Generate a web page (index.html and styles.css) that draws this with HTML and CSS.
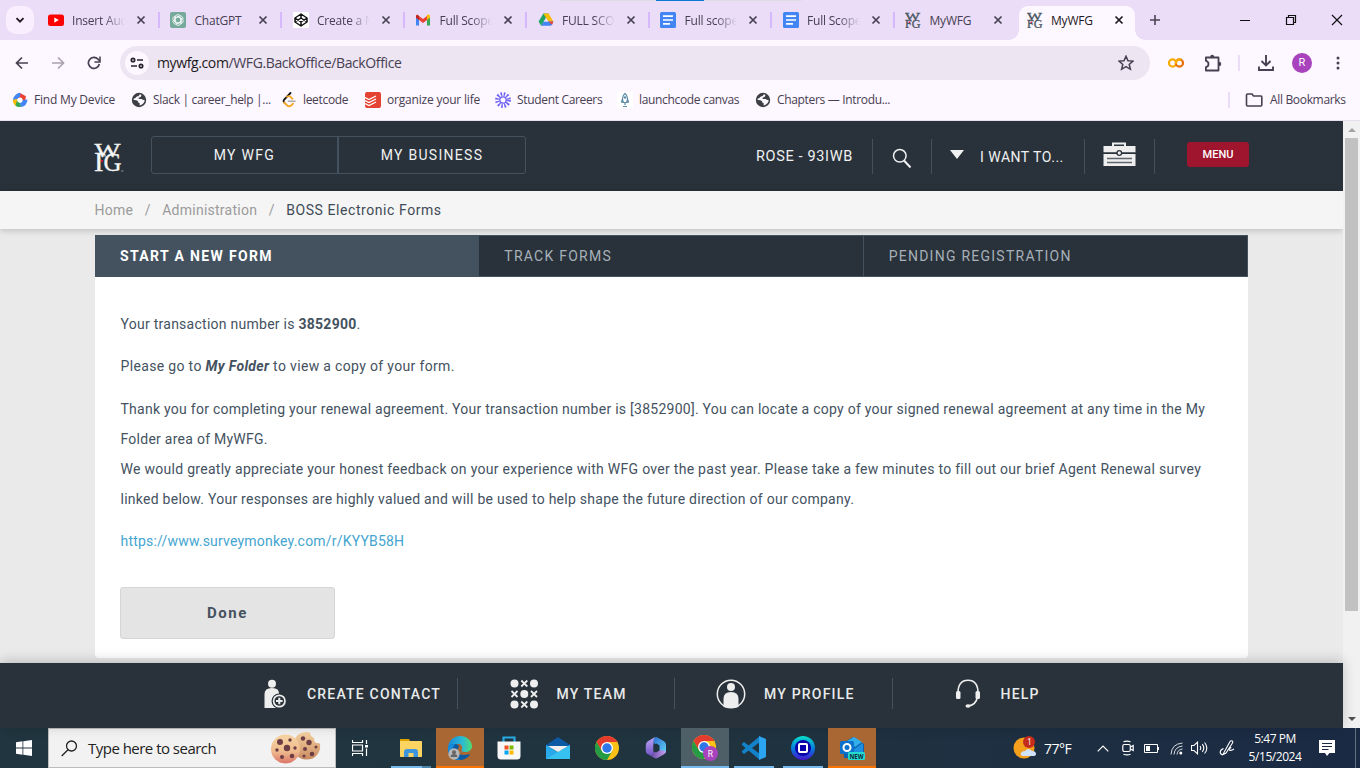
FILE: index.html
```html
<!DOCTYPE html>
<html lang="en">
<head>
<meta charset="utf-8">
<title>MyWFG</title>
<link rel="stylesheet" href="styles.css">
</head>
<body>
<svg class="defs" width="0" height="0">
  <symbol id="close" viewBox="0 0 16 16"><path d="M4.500 4.500l7 7M11.500 4.500l-7 7" stroke="currentColor" stroke-width="1.700" fill="none"/></symbol>
  <symbol id="docs" viewBox="0 0 16 16"><rect width="16" height="16" rx="1.500" fill="#4285f4"/><path d="M3 4.200h10M3 8h10M3 11.800h7" stroke="#fff" stroke-width="1.700"/></symbol>
  <symbol id="wfg" viewBox="0 0 16 16"><g fill="#485660" stroke="#485660" stroke-width=".3" font-family="Liberation Serif, serif"><text x="0" y="7.500" font-size="10.500" textLength="15" lengthAdjust="spacingAndGlyphs">W</text><text x="0" y="15.500" font-size="12.500" textLength="15.500" lengthAdjust="spacingAndGlyphs">FG</text></g><rect x="3.500" y="9.500" width="1.500" height="1.500" fill="#e02040"/></symbol>
  <symbol id="globe" viewBox="0 0 16 16"><circle cx="8" cy="8" r="7.200" fill="#3c4043"/><path d="M9.500 2.200c-2 .2-1 2-2.600 2.100-1.600.1-1.600 1.500-3.100 1.900-1 .3-1.200 1-1.300 1.800 2 .2 3.400.2 4.200.9.700.8.300 1.700 1.500 2 .9.300.4 1.200.4 2.500 2.800-.5 5-2.600 5.100-5.300-1.700 0-2.200-1.100-3.400-1.200-1.200-.1-2.200.3-2.700-.5-.3-.9.600-1 1.500-1.200 1-.3.500-1.400 1.400-1.800z" fill="#fdf7ff"/></symbol>
  <symbol id="chrome" viewBox="0 0 24 24"><circle cx="12" cy="12" r="12" fill="#fbc116"/><path d="M12 12L6.800 15 1.600 6A12 12 0 0 1 22.400 6H12z" fill="#e33b2e"/><path d="M1.600 6A12 12 0 0 0 12 24l5.200-9L12 17 6.800 15z" fill="#259b46"/><circle cx="12" cy="12" r="6" fill="#fff"/><circle cx="12" cy="12" r="4.700" fill="#2f76e8"/></symbol>
</svg>

<header class="browser">
  <div class="tabstrip">
    <div class="snap-hint"><i></i></div>
    <div class="tab-search"><svg width="10" height="10" viewBox="0 0 10 10"><path d="M1.500 3.200L5 6.700l3.500-3.500" stroke="#1f1a24" stroke-width="1.900" fill="none"/></svg></div>
    <div class="tab"><svg class="fav" viewBox="0 0 16 16"><rect y="2.500" width="16" height="11.500" rx="2.500" fill="#f00"/><path d="M6.300 5.500v5.200l4.500-2.600z" fill="#fff"/></svg><span>Insert Audio</span><svg class="x"><use href="#close"/></svg></div>
    <div class="tab"><svg class="fav" viewBox="0 0 16 16"><rect width="16" height="16" rx="2" fill="#75a99b"/><g fill="none" stroke="#fff" stroke-width=".8"><path id="petal" d="M5.300 9.600V5.200q0-2.600 2.600-2.600 1.400 0 2.200 1.200M5.300 5.800l3.600-2"/><use href="#petal" transform="rotate(60 8 8)"/><use href="#petal" transform="rotate(120 8 8)"/><use href="#petal" transform="rotate(180 8 8)"/><use href="#petal" transform="rotate(240 8 8)"/><use href="#petal" transform="rotate(300 8 8)"/></g></svg><span>ChatGPT</span><svg class="x"><use href="#close"/></svg></div>
    <div class="tab"><svg class="fav" viewBox="0 0 16 16"><rect width="16" height="16" rx="1" fill="#fff"/><path d="M8 2l6 4v4l-6 4-6-4V6zM2 6l6 4 6-4M2 10l6-4 6 4M8 2v4M8 10v4" fill="none" stroke="#111" stroke-width="1.500" stroke-linejoin="round"/></svg><span>Create a New</span><svg class="x"><use href="#close"/></svg></div>
    <div class="tab"><svg class="fav" viewBox="0 0 16 16"><path d="M1 4v9.500h3V7z" fill="#4285f4"/><path d="M15 4v9.500h-3V7z" fill="#34a853"/><path d="M12 4v4l3-2.300V4c0-1.600-1.700-2-3-1z" fill="#fbbc04"/><path d="M1 4v1.700L4 8V4L2.800 2.800C2 2.300 1 3 1 4z" fill="#c5221f"/><path d="M4 4l4 3 4-3v4l-4 3-4-3z" fill="#ea4335"/></svg><span>Full Scope D</span><svg class="x"><use href="#close"/></svg></div>
    <div class="tab"><svg class="fav" viewBox="0 0 16 16"><path d="M5.400 1.500h5.200L8 6 3.200 14 .6 9.600z" fill="#23a566"/><path d="M5.400 1.500h5.200l4.800 8.100h-5.100z" fill="#fbbc04"/><path d="M5.700 9.600h9.700l-1.400 3.100c-.4.700-1 1.100-1.800 1.100H3.200z" fill="#4285f4"/><path d="M10.300 9.600h5.100L14 12.800z" fill="#ea4335"/><path d="M8 6l2.300 3.600H5.700z" fill="#ebddf8"/></svg><span>FULL SCOPE</span><svg class="x"><use href="#close"/></svg></div>
    <div class="tab"><svg class="fav"><use href="#docs"/></svg><span>Full scope d</span><svg class="x"><use href="#close"/></svg></div>
    <div class="tab"><svg class="fav"><use href="#docs"/></svg><span>Full Scope D</span><svg class="x"><use href="#close"/></svg></div>
    <div class="tab nosep"><svg class="fav"><use href="#wfg"/></svg><span>MyWFG</span><svg class="x"><use href="#close"/></svg></div>
    <div class="tab active"><svg class="fav"><use href="#wfg"/></svg><span>MyWFG</span><svg class="x"><use href="#close"/></svg></div>
    <svg class="newtab" width="12" height="12"><path d="M6 1v10M1 6h10" stroke="#4b4452" stroke-width="1.600"/></svg>
    <div class="wincontrols">
      <svg width="12" height="12"><path d="M1 6.500h10" stroke="#111"/></svg>
      <svg width="12" height="12"><path d="M1.500 3.500h7v7h-7zM3.500 3.500v-2h7v7h-2" stroke="#111" stroke-width="1.200" fill="none"/></svg>
      <svg width="12" height="12"><path d="M1 1l10 10M11 1L1 11" stroke="#111" stroke-width="1.200"/></svg>
    </div>
  </div>
  <div class="toolbar">
    <div class="nav">
      <svg width="14" height="14" viewBox="0 0 14 14"><path d="M13 7H2M7 1.500L1.500 7 7 12.500" stroke="#474052" stroke-width="1.700" fill="none"/></svg>
      <svg width="14" height="14" viewBox="0 0 14 14"><path d="M1 7h11M7 1.500L12.500 7 7 12.500" stroke="#aaa3ae" stroke-width="1.700" fill="none"/></svg>
      <svg width="14" height="14" viewBox="0 0 14 14"><path d="M12.300 8A5.500 5.500 0 1 1 11 3.200L13 5" stroke="#474052" stroke-width="1.700" fill="none"/><path d="M13 .5V6H7.500" stroke="#474052" stroke-width="1.500" fill="none"/></svg>
    </div>
    <div class="omnibox">
      <div class="siteinfo"><svg width="14" height="12" viewBox="0 0 14 12"><g fill="none" stroke="#29232e" stroke-width="1.700"><circle cx="3" cy="3" r="1.700"/><path d="M7 3h6M1 9h6"/><circle cx="11" cy="9" r="1.700"/></g></svg></div>
      <span class="url"><b>mywfg.com</b>/WFG.BackOffice/BackOffice</span>
      <svg class="star" width="16" height="16" viewBox="0 0 16 16"><path d="M8 1.200l2 4.500 5 .4-3.800 3.300 1.200 4.900L8 11.700l-4.400 2.600 1.200-4.900L1 6.100l5-.4z" fill="none" stroke="#474052" stroke-width="1.500"/></svg>
    </div>
    <svg class="colab" width="16" height="10" viewBox="0 0 16 10"><circle cx="4.600" cy="5" r="3.600" fill="none" stroke="#f9ab00" stroke-width="2.200"/><circle cx="11.400" cy="5" r="3.600" fill="none" stroke="#e8710a" stroke-width="2.200"/><path d="M13 1.800A3.600 3.600 0 0 0 8 6" stroke="#f9ab00" stroke-width="2.200" fill="none"/></svg>
    <svg class="ext" width="18" height="18" viewBox="0 0 18 18"><path d="M1.900 3.500h12.600v13H1.900v-3.300q2.600-.6 2.600-3.200T1.900 6.800z" fill="none" stroke="#474052" stroke-width="1.800" stroke-linejoin="round"/><path d="M6.200 3a2 2.300 0 0 1 4 0zM15 7.700a2.300 2.200 0 0 1 0 4.400z" fill="#474052"/></svg>
    <i class="vline"></i>
    <svg class="dl" width="18" height="18" viewBox="0 0 18 18"><path d="M9 1v10M4.500 7L9 11.500 13.500 7M2 12.500V16h14v-3.500" stroke="#474052" stroke-width="1.900" fill="none"/></svg>
    <span class="avatar">R</span>
    <svg class="kebab" width="4" height="14"><g fill="#474052"><circle cx="2" cy="2" r="1.500"/><circle cx="2" cy="7" r="1.500"/><circle cx="2" cy="12" r="1.500"/></g></svg>
  </div>
  <div class="bookmarks">
    <svg class="bi" viewBox="0 0 16 16"><path d="M3.200 6L8 1l6 3.200-1 4.800-5-1z" fill="#ea4335"/><path d="M4 2.500Q7 0 8.500 1.200L8 4.500 5 7.500.8 8Q1 5 4 2.500z" fill="#4285f4"/><path d="M.8 8L5 7l1.500 4-2.500 3Q1 12 .8 8z" fill="#fbbc04"/><path d="M5 8.500l3.500 2.700L9 15q-4 .5-5.500-1.500z" fill="#34a853"/><path d="M11 8l4.500-.5Q15 14 9 15l-1-3.500z" fill="#4285f4"/><circle cx="8" cy="8" r="2.600" fill="#fff"/></svg><span class="m1">Find My Device</span>
    <svg class="bi"><use href="#globe"/></svg><span class="m2">Slack | career_help |...</span>
    <svg class="bi" viewBox="0 0 16 16"><g fill="none" stroke-linecap="round"><path d="M9.500 1L3.200 7.500q-1.200 1.500 0 3" stroke="#111" stroke-width="1.800"/><path d="M3.200 10.500l3 3q2 1.500 4 0l1.800-1.800M6 4.700q2-1.200 3.500.1l2 2" stroke="#f5a623" stroke-width="1.800"/><path d="M7.500 9.200H14" stroke="#aaa" stroke-width="1.600"/></g></svg><span class="m3">leetcode</span>
    <svg class="bi" viewBox="0 0 16 16"><rect width="16" height="16" rx="2" fill="#e44332"/><path d="M0 5.500l4 2 7-3.500M0 8.500l4 2 7-3.500M0 11.500l4 2 7-3.500" fill="none" stroke="#fff" stroke-width="1.200"/></svg><span class="m4">organize your life</span>
    <svg class="bi" viewBox="0 0 16 16"><circle cx="8" cy="8" r="3.200" fill="none" stroke="#6d63f5" stroke-width="1.300"/><circle cx="8" cy="8" r="5.800" fill="none" stroke="#6d63f5" stroke-width="4.200" stroke-dasharray="1.500 1.536"/></svg><span class="m5">Student Careers</span>
    <svg class="bi" viewBox="0 0 16 16"><rect width="16" height="16" fill="#fff"/><path d="M8 1.500c3 2.500 3 6.500 1.500 9h-3C5 8 5 4 8 1.500zM5.500 7L4.500 10l2 .5M10.500 7l1 3-2 .5M8 11v2" fill="none" stroke="#5b8ba6" stroke-width="1.200"/><circle cx="8" cy="5.500" r="1.200" fill="#5b8ba6"/><path d="M6 14.500h4" stroke="#5b8ba6"/></svg><span class="m6">launchcode canvas</span>
    <svg class="bi"><use href="#globe"/></svg><span class="m7">Chapters — Introdu...</span>
    <div class="allbm"><svg width="18" height="14" viewBox="0 0 18 14"><path d="M1.500 2q0-1 1-1H7l1.500 2H16q.8 0 .8.800V12q0 1-1 1H2.500q-1 0-1-1z" fill="none" stroke="#474052" stroke-width="1.600"/></svg><span>All Bookmarks</span></div>
  </div>
</header>

<main class="viewport">
  <div class="page">
    <div class="sitehead">
      <svg class="logo" width="31" height="30" viewBox="0 0 31 30"><g fill="#f4f5f5" stroke="#f4f5f5" stroke-width=".35" font-family="Liberation Serif, serif"><text x=".5" y="13.500" font-size="19.500" textLength="26" lengthAdjust="spacingAndGlyphs">W</text><text x="0" y="28.300" font-size="27" textLength="9.500" lengthAdjust="spacingAndGlyphs">I</text><text x="9.500" y="28.300" font-size="26" textLength="18" lengthAdjust="spacingAndGlyphs">G</text></g><path d="M5 11.200h6v2.500" stroke="#f4f5f5" fill="none"/><rect x="7" y="17" width="2" height="2" fill="#c01736"/><path d="M27 28h2.500" stroke="#87919a"/></svg>
      <div class="switch"><a class="w1"><span>MY WFG</span></a><a class="w2"><span>MY BUSINESS</span></a></div>
      <div class="user"><span>ROSE - 93IWB</span></div>
      <div class="find"><svg width="20" height="20" viewBox="0 0 20 20"><circle cx="7.800" cy="7.800" r="6.300" fill="none" stroke="#f0f1f1" stroke-width="1.500"/><path d="M12 12.500l6.500 7" stroke="#f0f1f1" stroke-width="2"/></svg></div>
      <div class="want"><i class="tri"></i><span>I WANT TO...</span></div>
      <div class="case"><svg width="33" height="25" viewBox="0 0 33 25"><path d="M10 4.500v-3h12v3" fill="none" stroke="#eee" stroke-width="2"/><path d="M.5 4h32v6.500H.5z" fill="#eee"/><path d="M.5 12h32v12H.5z" fill="#eee"/><path d="M0 11h32.500" stroke="#29323a"/><circle cx="16.300" cy="11" r="2.300" fill="#eee" stroke="#29323a" stroke-width="1.300"/><path d="M4 16.500h25M4 20.500h25" stroke="#5d666d" stroke-width="1.400"/></svg></div>
      <a class="menu"><span>MENU</span></a>
    </div>
    <nav class="crumbs"><span>Home</span><i>/</i><span>Administration</span><i>/</i><b>BOSS Electronic Forms</b></nav>
    <section class="card">
      <div class="formtabs"><a class="on"><span>START A NEW FORM</span></a><a><span>TRACK FORMS</span></a><a><span>PENDING REGISTRATION</span></a></div>
      <div class="body">
        <p>Your transaction number is <strong>3852900</strong>.</p>
        <p class="folder">Please go to <strong><em>My Folder</em></strong> to view a copy of your form.</p>
        <p><span>Thank you for completing your renewal agreement. Your transaction number is [3852900]. You can locate a copy of your signed renewal agreement at any time in the My</span><br><span>Folder area of MyWFG.</span><br><span class="feedback">We would greatly appreciate your honest feedback on your experience with WFG over the past year. Please take a few minutes to fill out our brief Agent Renewal survey</span><br><span>linked below. Your responses are highly valued and will be used to help shape the future direction of our company.</span></p>
        <p><a class="survey">https://www.surveymonkey.com/r/KYYB58H</a></p>
        <button class="done">Done</button>
      </div>
    </section>
    <footer class="dock">
      <a class="d1"><svg width="22" height="30" viewBox="0 0 22 30"><circle cx="8" cy="4.800" r="4" fill="#eee"/><path d="M.5 29V15Q.5 9 8 9t7 6v2a6 6 0 0 0-1 12z" fill="#eee"/><circle cx="15" cy="22" r="7.500" fill="#29323a"/><circle cx="15.300" cy="22" r="5.700" fill="none" stroke="#eee" stroke-width="1.700"/><path d="M12 22h6.600M15.300 18.700v6.600" stroke="#eee" stroke-width="2"/></svg><span>CREATE CONTACT</span></a>
      <a class="d2"><svg width="29" height="30" viewBox="0 0 29 30"><g fill="#eee"><circle cx="4.500" cy="4.500" r="4"/><circle cx="24" cy="4.500" r="4"/><circle cx="14.300" cy="15" r="4"/><circle cx="4.500" cy="25.500" r="4"/><circle cx="24" cy="25.500" r="4"/></g><path d="M11.300 1.500l6 6m0-6l-6 6M1.500 12l6 6m0-6l-6 6M21 12l6 6m0-6l-6 6M11.300 22.500l6 6m0-6l-6 6" stroke="#eee" stroke-width="1.800"/></svg><span>MY TEAM</span></a>
      <a class="d3"><svg width="30" height="30" viewBox="0 0 30 30"><circle cx="15" cy="15" r="13.700" fill="none" stroke="#eee" stroke-width="1.500"/><circle cx="15" cy="8" r="4" fill="#eee"/><path d="M7.500 28V20q0-7 7.500-7t7.500 7v8q-7.500 2-15 0z" fill="#eee"/></svg><span>MY PROFILE</span></a>
      <a class="d4"><svg width="26" height="30" viewBox="0 0 26 30"><path d="M3 14Q3 1.300 13 1.300T23 14M22.500 18q-1.500 8-9.500 9" fill="none" stroke="#eee" stroke-width="1.600"/><rect x="1" y="12" width="4.500" height="8" rx="1.500" fill="#eee"/><rect x="20.500" y="12" width="4.500" height="8" rx="1.500" fill="#eee"/><ellipse cx="13" cy="27" rx="2.500" ry="1.800" fill="#eee"/></svg><span>HELP</span></a>
    </footer>
  </div>
  <div class="scroll"><i class="up"></i><div class="thumb"></div><i class="down"></i></div>
</main>

<div class="taskbar">
  <div class="start"><svg width="16" height="16" viewBox="0 0 16 16"><path d="M0 2.200L6.500 1.300v6.200H0zM7.300 1.200L16 0v7.500H7.300zM0 8.400h6.500v6.300L0 13.800zM7.300 8.400H16V16l-8.700-1.200z" fill="#fff"/></svg></div>
  <div class="search"><svg width="17" height="17" viewBox="0 0 17 17"><circle cx="10.500" cy="6" r="5" fill="none" stroke="#222" stroke-width="1.300"/><path d="M7 9.800L.7 16" stroke="#222" stroke-width="1.300"/></svg><span>Type here to search</span>
    <svg class="cookies" width="51" height="34" viewBox="0 0 51 34"><defs><linearGradient id="ck" x2="0" y2="1"><stop offset="0" stop-color="#f8d6a5"/><stop offset=".6" stop-color="#efb98c"/><stop offset="1" stop-color="#db7468"/></linearGradient><linearGradient id="ck2" x2="0" y2="1"><stop offset="0" stop-color="#f6d2a0"/><stop offset="1" stop-color="#c98b62"/></linearGradient></defs><path d="M36 1q3 0 4 .5.500 4 4 5.500 0 5 3 5t3 1q1 6-3 11t-12 4.500q-9-1-11-10Q22 2 36 1z" fill="url(#ck2)"/><circle cx="15.500" cy="18" r="14.500" fill="url(#ck)"/><g fill="#6d3d45"><circle cx="10" cy="11" r="3"/><circle cx="17" cy="17" r="3.200"/><circle cx="20" cy="9" r="1.700"/><circle cx="25" cy="17" r="1.700"/><circle cx="7" cy="19" r="1.700"/><circle cx="12" cy="26" r="2"/><circle cx="22" cy="25" r="2.300"/><circle cx="33" cy="7.500" r="2.200"/><circle cx="39" cy="11.500" r="2.700"/><circle cx="35" cy="18" r="2"/><circle cx="42" cy="23" r="2.300"/><circle cx="46" cy="16" r="1.500"/><circle cx="34" cy="25" r="1.600"/></g></svg>
  </div>
  <div class="app taskview"><svg width="16" height="16" viewBox="0 0 16 16"><path d="M.5 0v2.500h10V0M.5 5h10v6H.5zM.5 16v-2.500h10V16M14.500 0v4M14.500 8.500V16" fill="none" stroke="#fff" stroke-width="1.200"/><rect x="13" y="5" width="3" height="2.500" fill="#fff"/></svg></div>
  <div class="app run multi"><svg width="24" height="24" viewBox="0 0 24 24"><path d="M1 3h9l1 2h-1v3H1z" fill="#dfa100"/><rect x="1" y="5" width="22" height="16" rx=".7" fill="#fcd462"/><path d="M5 21v-5q0-3 3-3h8q3 0 3 3v5h-4.500v-4h-5v4z" fill="#3d95dd"/></svg></div>
  <div class="app hot"><svg width="26" height="24" viewBox="0 0 26 24"><defs><linearGradient id="ed"><stop offset="0" stop-color="#1689d8"/><stop offset=".6" stop-color="#2bbbd4"/><stop offset="1" stop-color="#50dc72"/></linearGradient></defs><path d="M1 11C2 4 7 0 13 0c7 0 12 5 12 10 0 4-3 6-7 6-3 0-4-1-3-3 1-3-1-5-4-5-5 0-8 3-10 3z" fill="url(#ed)"/><path d="M1 12c1-3 4-4 7-4 2 0 4 1 4 3-3 2-2 8 5 8 3 0 5-1 6-1-2 4-6 6-11 6C5 24 0 18 1 12z" fill="#0c59a4"/><path d="M8 8q-4 5-1 10t7 6Q3 24 1 14q-1-6 7-6z" fill="#148cda"/><circle cx="7" cy="18" r="5.700" fill="#b7b7b7"/><circle cx="7" cy="16.200" r="2" fill="#666"/><path d="M3.500 21q0-3 3.500-3t3.500 3z" fill="#666"/></svg></div>
  <div class="app"><svg width="24" height="24" viewBox="0 0 24 24"><path d="M6.500 6V1.500h11V6" fill="none" stroke="#27aae1" stroke-width="2.200"/><path d="M.5 5.500h23V20q0 3.500-3.500 3.500H4Q.5 23.500.5 20z" fill="#f7f7f7"/><path d="M7.500 9.500h4v4h-4z" fill="#f25022"/><path d="M12.500 9.500h4v4h-4z" fill="#7fba00"/><path d="M7.500 14.500h4v4h-4z" fill="#00a4ef"/><path d="M12.500 14.500h4v4h-4z" fill="#ffb900"/></svg></div>
  <div class="app"><svg width="24" height="24" viewBox="0 0 24 24"><path d="M0 9l12-8 12 8v4H0z" fill="#0c59a4"/><path d="M0 9l12 7 12-7v14H0z" fill="#29a9ea"/><path d="M0 23l12-7 12-7v14z" fill="#37c1f1"/><path d="M2 10h20l-10 6z" fill="#f1f1f1"/></svg></div>
  <div class="app"><svg width="24" height="24"><use href="#chrome"/></svg></div>
  <div class="app"><svg width="22" height="24" viewBox="0 0 22 24"><defs><linearGradient id="m1" x2="0" y2="1"><stop offset="0" stop-color="#bfa6f5"/><stop offset="1" stop-color="#7357c8"/></linearGradient><linearGradient id="m2" x2="1" y2="1"><stop offset="0" stop-color="#2f6fd0"/><stop offset="1" stop-color="#62d4f5"/></linearGradient><linearGradient id="m3"><stop offset="0" stop-color="#5a3e9c"/><stop offset="1" stop-color="#c9a0ee"/></linearGradient></defs><path d="M10 1L2.500 5.500Q.8 7 .8 9v6q0 2 1.700 3l2 1q3.500 1 4-3V8q0-4 1.500-7z" fill="url(#m1)"/><path d="M8.500 4Q9 1 11.500 1l7.500 4.200q2 1.200 2 3.800v6q0 3-3 2l-4.500-2.500V9.500L8.500 7z" fill="url(#m2)"/><path d="M4 19q4 0 4.500-2.500l5-2.500 7.500 1q0 2-2 3.200L12.500 22q-1.500.8-3 0z" fill="url(#m3)"/><path d="M8.500 9l3-1.500 3 2v5L11 16.500l-2.500-1.500z" fill="#20343f"/></svg></div>
  <div class="app run current"><svg width="27" height="26" viewBox="0 0 27 26"><use href="#chrome" width="24" height="24"/><circle cx="18.500" cy="18.500" r="7.500" fill="#a842bd"/><text x="15.800" y="21.800" fill="#fff" font-size="8.500" font-family="Roboto,sans-serif">R</text></svg></div>
  <div class="app run"><svg width="24" height="24" viewBox="0 0 24 24"><path d="M0 7.700L2 6l16 12v6L0 9z" fill="#1482c8"/><path d="M0 16.300L2 18 18 6V0L0 15z" fill="#1482c8"/><path d="M17 0l7 3v18l-7 3z" fill="#2ba5ef"/></svg></div>
  <div class="app run"><svg width="24" height="24" viewBox="0 0 24 24"><defs><linearGradient id="rg" x2="0" y2="1"><stop offset="0" stop-color="#06dfcc"/><stop offset=".55" stop-color="#0876dd"/><stop offset="1" stop-color="#4713ce"/></linearGradient></defs><circle cx="12" cy="12" r="12" fill="url(#rg)"/><circle cx="12" cy="12" r="8" fill="#0803aa"/><rect x="8" y="8" width="8" height="8" rx="1" fill="none" stroke="#fff" stroke-width="2"/></svg></div>
  <div class="app hot"><svg width="26" height="24" viewBox="0 0 26 24"><path d="M4 7l10-6 11 7v14H5z" fill="#0c61b1"/><path d="M8 5l7-4 8 5-7 5z" fill="#32aee9"/><path d="M15 13l9-6v13H8z" fill="#1b91df"/><rect x="1" y="5" width="14" height="13" rx="1.500" fill="#0d72ce"/><circle cx="8" cy="11.500" r="3.500" fill="none" stroke="#fff" stroke-width="2"/><rect x="9" y="16" width="17" height="8" rx="1.500" fill="#24dbd3"/><text x="10.500" y="22.600" font-size="6.500" font-weight="bold" font-family="Open Sans,sans-serif" fill="#102a32" textLength="14" lengthAdjust="spacingAndGlyphs">NEW</text></svg></div>
  <div class="tray">
    <svg class="wx" width="24" height="24" viewBox="0 0 24 24"><circle cx="11" cy="12" r="10.500" fill="#f5a01c"/><path d="M10 20q-3 0-2-3 1-2 4-2 3-4 7 0 4 0 4 3 0 2-3 2z" fill="#cfe3fa"/><circle cx="16" cy="6" r="6" fill="#c42b1c"/><text x="14" y="9" font-size="8.500" font-family="Open Sans,sans-serif" fill="#fff">1</text></svg>
    <span class="temp">77°F</span>
    <svg class="chev" width="12" height="7"><path d="M.7 6.300L6 1l5.300 5.300" fill="none" stroke="#fff" stroke-width="1.200"/></svg>
    <svg class="cam" width="12" height="16" viewBox="0 0 12 16"><g fill="none" stroke="#fff" stroke-width="1.200"><rect x=".8" y="4.500" width="7.500" height="7" rx="1.500"/><path d="M8.500 7l2.700-1.500v5L8.500 9M1.500 1.800q3.500-1.500 7 0M1.500 14.200q3.500 1.500 7 0"/></g></svg>
    <svg class="bat" width="15" height="9"><path d="M.5.500h13v8H.5z" fill="none" stroke="#fff"/><path d="M2 2h4v5H2zM14 3h1v3h-1z" fill="#fff"/></svg>
    <svg class="wifi" width="13" height="13"><g fill="none" stroke="#d7dce2"><path d="M1 12.500Q1.500 2 12.500 1"/><path d="M4 12.500Q4.500 5 12.500 4M7 12.500q.5-5 5.500-5.500"/></g><circle cx="10.800" cy="11" r="1.500" fill="#fff"/></svg>
    <svg class="vol" width="17" height="14" viewBox="0 0 17 14"><g fill="none" stroke="#fff" stroke-width="1.100"><path d="M.5 4.500h2.500L6.500 1.200v11.600L3 9.500H.5zM9 5q1.500 2 0 4M11.300 3.200q3 3.800 0 7.600M13.600 1.500q4.500 5.500 0 11"/></g></svg>
    <svg class="pen" width="17" height="16" viewBox="0 0 17 16"><g fill="none" stroke="#fff" stroke-width="1.100"><path d="M5 12.500L11 1.500q1-1.200 2.200-.5 1 .8.300 2L7 13l-3 1.500zM4.500 8.500Q1 10 1.200 12.500q.8 3 4 1.500M9 9.500q3-1.500 3-2.500M10 9.500q1 2 5-.5"/></g></svg>
    <div class="clock"><span>5:47 PM</span><span>5/15/2024</span></div>
    <svg class="note" width="16" height="16" viewBox="0 0 16 16"><path d="M0 0h16v13h-5.500L8 16l-2-3H0z" fill="#fff"/><path d="M3 3.500h10M3 6.500h10M3 9.500h6.500" stroke="#1b2b43"/></svg>
    <i class="desk"></i>
  </div>
</div>
</body>
</html>
```
FILE: styles.css
```css
* { box-sizing: border-box; }
body { margin: 0; width: 1360px; height: 768px; overflow: hidden; display: flex; flex-direction: column; font-family: "Open Sans", sans-serif; background: #eaeaea; }
svg { display: block; flex: none; }
span, b, a { white-space: nowrap; }
.defs { display: none; }

/* browser chrome */
.browser { height: 121px; background: #fdf7ff; border-bottom: 1px solid #e7dfec; font-size: 12px; color: #474052; flex: none; }
.tabstrip { height: 40px; background: #ebddf8; display: flex; align-items: center; position: relative; }
.snap-hint { position: absolute; top: 0; left: 560px; width: 242px; height: 1px; background: #dedce2; padding-left: 96px; }
.snap-hint i { display: block; width: 48px; height: 1px; background: #0c78d4; }
.tab-search { width: 28px; height: 28px; margin: 0 4.300px 0 6px; border-radius: 10px; background: #f8eefd; display: flex; align-items: center; justify-content: center; flex: none; }
.tab { width: 122.500px; height: 34px; margin-top: 6px; padding: 0 0 6px 9.700px; display: flex; align-items: center; position: relative; flex: none; }
.tab::after { content: ""; width: 2px; height: 16px; background: #d6b9fc; margin-left: 9px; }
.tab.nosep::after, .tab.active::after { display: none; }
.fav { width: 16px; height: 16px; margin-right: 8px; }
.tab span { width: 53px; overflow: hidden; letter-spacing: -.2px; -webkit-mask-image: linear-gradient(90deg, #000 60%, transparent); }
.tab.nosep span, .tab.active span, .tab:nth-child(4) span { -webkit-mask-image: none; }
.tab .x { width: 16px; height: 16px; margin-left: 8px; color: #474052; }
.tab.active { width: 116px; margin-left: .7px; padding-left: 8px; background: #fdf7ff; border-radius: 9px 9px 0 0; color: #1d1a20; }
.tab.active::before { content: ""; position: absolute; left: -10px; right: -10px; bottom: 0; height: 10px; background: radial-gradient(circle at 0 0, transparent 9.500px, #fdf7ff 10px) left/10px 10px no-repeat, radial-gradient(circle at 100% 0, transparent 9.500px, #fdf7ff 10px) right/10px 10px no-repeat; }
.tab.active .x { color: #1d1a20; margin-left: 7px; }
.newtab { margin-left: 14px; }
.wincontrols { margin-left: auto; padding-right: 17px; display: flex; gap: 34px; }
.toolbar { height: 46px; display: flex; align-items: center; }
.nav { display: flex; gap: 22px; padding-left: 15px; width: 120px; flex: none; }
.omnibox { width: 1030px; height: 34px; border-radius: 17px; background: #ede5f2; display: flex; align-items: center; padding: 0 16px 0 5px; flex: none; }
.siteinfo { width: 24px; height: 24px; border-radius: 50%; background: #fdf7ff; display: flex; align-items: center; justify-content: center; }
.url { margin: -2px 0 0 8px; font-size: 14px; letter-spacing: -.38px; }
.url b { font-weight: 400; color: #1d1a20; }
.star { margin-left: auto; }
.colab { margin-left: 18px; }
.ext { margin-left: 20px; }
.vline { width: 2px; height: 16px; background: #ebddf8; margin-left: 16px; }
.dl { margin-left: 17px; }
.avatar { width: 20px; height: 20px; border-radius: 50%; background: #a842bd; color: #fff; font: 11px/20px Roboto, sans-serif; text-align: center; margin-left: 17px; }
.kebab { margin-left: 24px; }
.bookmarks { display: flex; align-items: center; height: 28px; padding-left: 12px; }
.bi { width: 16px; height: 16px; margin-right: 6px; }
.bookmarks span { letter-spacing: -.33px; margin-top: -1px; }
.bookmarks .m1, .bookmarks .m4 { letter-spacing: -.2px; }
.m1 { width: 97px; } .m2 { width: 128px; } .m3 { width: 62px; } .m4 { width: 108px; } .m5 { width: 100px; } .m6 { width: 116px; }
.allbm { margin-left: auto; width: 132px; height: 16px; border-left: 2px solid #ebddf8; display: flex; align-items: center; gap: 7px; padding-left: 15px; }

/* page */
.viewport { height: 607px; display: flex; flex: none; }
.page { width: 1343px; background: #eaeaea; font-family: Roboto, sans-serif; color: #44525f; display: flex; flex-direction: column; }
.sitehead { height: 70px; background: #29323a; display: flex; padding: 0 0 0 94px; color: #f0f1f1; flex: none; }
.logo { margin: 22px 26px 0 0; }
.switch { width: 375px; height: 38px; margin-top: 15px; border: 1px solid #44525f; border-radius: 3px; display: flex; font-size: 14px; letter-spacing: 1.300px; }
.switch a { flex: 1; display: flex; align-items: center; justify-content: center; }
.switch .w1 { flex: 0 0 185px; }
.switch a + a { border-left: 2px solid #44525f; }
.user, .find, .want, .case { height: 35px; margin-top: 18px; border-right: 1px solid #46505a; display: flex; align-items: center; font-size: 14px; }
.user { margin-left: 230px; width: 117px; font-size: 14.500px; letter-spacing: .65px; }
.find { width: 59px; padding: 3px 0 0 19px; }
.want { width: 153px; padding-left: 18px; letter-spacing: .5px; }
.tri { border: 7px solid transparent; border-top: 9px solid #f0f1f1; border-bottom: 0; margin: -4px 16px 0 0; }
.case { width: 70px; padding: 0 0 5px 18px; }
.menu { width: 62px; height: 25px; margin: 21px 0 0 32px; border-radius: 3px; background: #9e152d; font: 500 11px/25px Roboto, sans-serif; text-align: center; color: #fff; }
.crumbs { height: 38px; background: #f5f5f5; padding-left: 94.500px; display: flex; align-items: center; font-size: 14px; color: #9b9b9b; box-shadow: 0 1px 7px rgba(0,0,0,.22); flex: none; letter-spacing: .25px; }
.crumbs i { font-style: normal; margin: 0 11.500px; }
.crumbs b { font-weight: 400; color: #3f4b56; letter-spacing: .57px; }
.card { width: 1153px; height: 423px; margin: 6px 0 0 95px; background: #fff; border-radius: 0 0 4px 4px; flex: none; position: relative; }
.formtabs { display: flex; height: 42px; font-size: 14px; letter-spacing: 1.250px; color: #a7b0b8; }
.formtabs a { flex: 1; border: 1px solid #44525f; border-left-width: 0; background: #29323a; display: flex; align-items: center; padding-left: 25px; }
.formtabs a.on { background: #44525f; color: #fff; font-weight: 700; letter-spacing: 1.350px; }
.body { padding: 32px 25px 0 25.500px; font-size: 14px; line-height: 30px; letter-spacing: .26px; }
.body p { margin: 0 0 12.400px; }
.body .folder { letter-spacing: .34px; }
.feedback { letter-spacing: .282px; }
.survey { color: #44a5d0; letter-spacing: .2px; }
.done { display: block; margin: 31px 0 0 -.5px; width: 215px; height: 52px; border: 1px solid #d6d6d6; border-radius: 3px; background: #e4e4e4; color: #44525f; font: 700 15px Roboto, sans-serif; letter-spacing: 1.600px; padding: 0; }
.dock { height: 65px; margin-top: 5px; background: #29323a; display: flex; align-items: flex-start; padding: 15px 0 0 240px; box-shadow: 0 -2px 12px rgba(0,0,0,.2); position: relative; font-size: 14px; font-weight: 500; letter-spacing: 1.200px; color: #e8eaeb; flex: none; }
.dock a { width: 217.500px; height: 31px; border-right: 1px solid #44525f; display: flex; align-items: center; }
.dock a:last-child { border: 0; }
.d1 { padding-left: 24px; } .d1 span { margin-left: 21px; }
.d2 { padding-left: 52px; } .d2 span { margin-left: 18px; }
.d3 { padding-left: 41px; } .d3 span { margin-left: 18px; }
.d4 { padding-left: 62px; } .d4 span { margin-left: 20px; }
.scroll { width: 17px; background: #f1f1f1; display: flex; flex-direction: column; align-items: center; }
.up, .down { width: 0; height: 0; border: 4px solid transparent; }
.up { border-bottom-color: #a3a3a3; border-top: 0; margin: 7px 0 6px; }
.thumb { width: 13px; height: 473px; background: #c1c1c1; }
.down { border-top: 4px solid #505050; border-bottom: 0; margin-top: auto; margin-bottom: 7px; }

/* taskbar */
.taskbar { height: 40px; flex: none; background: linear-gradient(90deg, #20353f, #20343f 50%, #1b2a44); display: flex; color: #fff; }
.start { width: 48px; display: flex; align-items: center; justify-content: center; }
.search { width: 288px; background: #f2f2f2; border: 1px solid #bcbcbc; display: flex; align-items: center; padding: 0 14px 0 12px; color: #222; font-size: 15px; }
.search span { margin-left: 10px; letter-spacing: -.52px; }
.cookies { margin-left: auto; }
.app { width: 48px; margin-right: 1px; display: flex; align-items: center; justify-content: center; position: relative; }
.taskview { margin-right: 3px; }
.run::after { content: ""; position: absolute; left: 4px; right: 4px; bottom: 0; height: 2px; background: #76b9ed; }
.multi::after { background: linear-gradient(90deg, #76b9ed 31px, #4c85ab 31px); }
.current { background: #4f5f68; }
.current::after { left: 0; right: 0; }
.hot { background: #a86733; border-bottom: 2px solid #f77400; padding-top: 2px; }
.tray { display: flex; align-items: center; margin-left: 136px; flex: 1; }
.temp { font-size: 14px; letter-spacing: -.5px; width: 53px; margin-left: 7px; }
.cam { margin-left: 13px; } .bat { margin-left: 10px; } .wifi { margin-left: 11px; } .vol { margin-left: 8px; } .pen { margin-left: 11px; }
.clock { width: 60px; margin-left: 9px; display: flex; flex-direction: column; text-align: center; font-size: 12px; line-height: 18px; letter-spacing: -.45px; }
.note { margin-left: 14px; }
.desk { width: 1px; height: 40px; background: #657083; margin-left: 20px; }
```
